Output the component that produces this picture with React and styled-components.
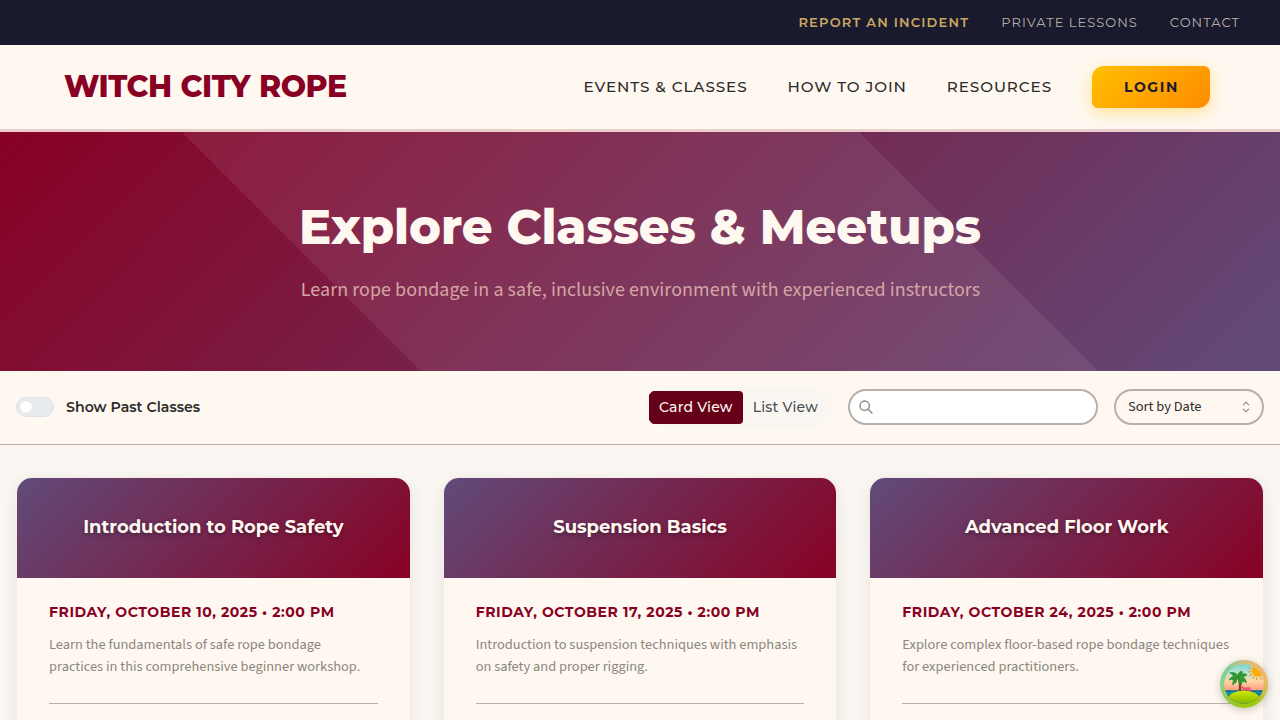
import React from 'react';
import styled, { createGlobalStyle } from 'styled-components';

const GlobalStyle = createGlobalStyle`
  *, *::before, *::after { box-sizing: border-box; }
  body {
    margin: 0;
    background: #faf6f2;
    color: #2b2b2b;
    font-family: 'Source Sans 3', 'Noto Sans CJK SC', 'Open Sans', sans-serif;
    font-size: 16px;
  }
  h1, h2, p { margin: 0; }
`;

const heading = `font-family: 'Montserrat', Inter, sans-serif;`;

const Page = styled.div`
  height: 100vh;
  overflow: hidden;
`;

const UtilityBar = styled.nav`
  ${heading}
  display: flex;
  align-items: center;
  justify-content: flex-end;
  gap: 32px;
  height: 45px;
  padding: 0 40px 2px;
  background: #1a1a2e;
`;

const UtilityLink = styled.a`
  font-size: 13px;
  font-weight: ${(p) => (p.$highlight ? 600 : 400)};
  letter-spacing: ${(p) => (p.$highlight ? '1.2px' : '1.03px')};
  line-height: 20px;
  color: ${(p) => (p.$highlight ? '#c9a961' : '#b8b0a8')};
  text-transform: uppercase;
`;

const Header = styled.header`
  ${heading}
  display: flex;
  align-items: center;
  justify-content: space-between;
  height: 87px;
  padding: 0 70px 0 64px;
  background: #fff8f0;
  border-bottom: 3px solid #e9cecb;
`;

const Logo = styled.a`
  padding-bottom: 2px;
  font-size: 30px;
  font-weight: 800;
  letter-spacing: -0.5px;
  word-spacing: 0.8px;
  color: #880124;
`;

const MainNav = styled.nav`
  display: flex;
  align-items: center;
  gap: 40px;
`;

const NavLink = styled.a`
  padding-bottom: 2px;
  font-size: 15.2px;
  font-weight: 500;
  letter-spacing: 0.92px;
  text-transform: uppercase;
`;

const LoginButton = styled.a`
  width: 118px;
  height: 42px;
  padding-left: 32px;
  border-radius: 12px 6px 12px 6px;
  background: linear-gradient(135deg, #ffbf00, #ff8c00);
  box-shadow: 0 4px 15px rgba(255, 191, 0, 0.4);
  color: #1a1a2e;
  font-size: 14px;
  font-weight: 700;
  letter-spacing: 1.6px;
  line-height: 42px;
`;

const Hero = styled.section`
  height: 239px;
  padding-top: 66px;
  text-align: center;
  background:
    linear-gradient(45deg, transparent 27.65%, rgba(235, 210, 220, 0.09) 27.75%, rgba(235, 210, 220, 0.09) 72.25%, transparent 72.35%),
    linear-gradient(135deg, #880124, #614b79);
`;

const HeroTitle = styled.h1`
  ${heading}
  font-size: 48px;
  font-weight: 800;
  letter-spacing: -0.06px;
  line-height: 58px;
  color: #fff8f0;
`;

const HeroText = styled.p`
  margin-top: 18px;
  padding-left: 1px;
  font-size: 20px;
  font-weight: 400;
  letter-spacing: 0.06px;
  line-height: 32px;
  color: #d4a5a5;
`;

const FilterBar = styled.section`
  display: flex;
  align-items: center;
  justify-content: space-between;
  height: 74px;
  padding: 0 16px 1px;
  background: #fff8f0;
  border-bottom: 1px solid #b8b0a8;
`;

const ToggleLabel = styled.label`
  ${heading}
  display: flex;
  align-items: center;
  gap: 12px;
  font-size: 14.2px;
  font-weight: 600;
`;

const Switch = styled.span`
  display: flex;
  align-items: center;
  width: 38px;
  height: 20px;
  padding: 0 2px;
  border: 1px solid #dee2e6;
  border-radius: 10px;
  background: #e9ecef;
`;

const Thumb = styled.span`
  width: 14px;
  height: 14px;
  border: 1px solid #dee2e6;
  border-radius: 50%;
  background: #fff;
`;

const Controls = styled.div`
  display: flex;
  align-items: center;
  gap: 16px;
`;

const ViewGroup = styled.div`
  display: flex;
  width: 187px;
  height: 41px;
  margin-top: 1px;
  padding: 4px;
  border-radius: 20px;
  overflow: hidden;
  background: #faf6f2;
`;

const ViewButton = styled.button`
  ${heading}
  height: 33px;
  padding: 0 10px;
  border: 0;
  border-radius: 4px;
  background: ${(p) => (p.$active ? '#660018' : 'transparent')};
  color: ${(p) => (p.$active ? '#fff8f0' : '#495057')};
  font-size: 14px;
  font-weight: 500;
  letter-spacing: 0.2px;
  line-height: 33px;
  white-space: nowrap;
`;

const Field = styled.div`
  display: flex;
  align-items: center;
  justify-content: space-between;
  width: ${(p) => p.$width}px;
  height: 36px;
  padding: ${(p) => p.$padding};
  border: 2px solid #b8b0a8;
  border-radius: 18px;
  background: ${(p) => p.$fill};
  font-size: 14.4px;
  line-height: 22px;
`;

const CardGrid = styled.main`
  display: grid;
  grid-template-columns: repeat(3, 1fr);
  gap: 32px;
  padding: 32px 16px;
`;

const Card = styled.article`
  min-height: 340px;
  border: 1px solid rgba(183, 109, 117, 0.1);
  border-radius: 16px;
  overflow: hidden;
  background: #fff8f0;
  box-shadow: 0 4px 15px rgba(0, 0, 0, 0.08);
`;

const CardHead = styled.div`
  display: flex;
  align-items: center;
  justify-content: center;
  height: 100px;
  padding-bottom: 2px;
  background: linear-gradient(135deg, #614b79, #880124);
`;

const CardTitle = styled.h2`
  ${heading}
  font-size: 18px;
  font-weight: 700;
  letter-spacing: -0.03px;
  line-height: 24px;
  color: #fff8f0;
  text-shadow: 0 2px 4px rgba(0, 0, 0, 0.35);
`;

const CardBody = styled.div`
  padding: 22px 32px;
`;

const CardDate = styled.p`
  ${heading}
  font-size: 14px;
  font-weight: 700;
  letter-spacing: 0.57px;
  line-height: 24px;
  white-space: nowrap;
  text-transform: uppercase;
  color: #880124;
`;

const CardText = styled.p`
  margin-top: 10px;
  padding-bottom: 25px;
  font-size: 14.4px;
  line-height: 22px;
  color: #8b8680;
`;

const CardFoot = styled.div`
  height: 80px;
  border-top: 1px solid #b8b0a8;
`;

const IslandButton = styled.button`
  position: fixed;
  right: 12px;
  bottom: 12px;
  width: 48px;
  height: 48px;
  padding: 0;
  border: 0;
  border-radius: 50%;
  background: none;
  box-shadow: 0 2px 8px rgba(0, 0, 0, 0.2);
  svg { display: block; }
`;

const SearchIcon = () => (
  <svg width="16" height="16" viewBox="0 0 24 24" fill="none" stroke="#8b8680" strokeWidth="2" strokeLinecap="round">
    <circle cx="10" cy="10" r="7" />
    <path d="M21 21l-6-6" />
  </svg>
);

const SelectorIcon = () => (
  <svg width="18" height="18" viewBox="0 0 15 15" fill="#868e96">
    <path d="M4.93 5.43a.45.45 0 0 0 .64.64L7.5 4.14l1.93 1.93a.45.45 0 0 0 .64-.64L7.82 3.18a.45.45 0 0 0-.64 0ZM10.07 9.57a.45.45 0 0 0-.64-.64L7.5 10.86 5.57 8.93a.45.45 0 0 0-.64.64l2.25 2.25c.18.17.46.17.64 0Z" />
  </svg>
);

const IslandIcon = () => (
  <svg width="48" height="48" viewBox="0 0 48 48">
    <defs>
      <linearGradient id="ring" x1="0" y1="0.1" x2="0.75" y2="1">
        <stop offset="0" stopColor="#6fd0a8" />
        <stop offset="0.3" stopColor="#8fcf86" />
        <stop offset="0.65" stopColor="#98c62c" />
        <stop offset="1" stopColor="#9fc900" />
      </linearGradient>
      <linearGradient id="ringWarm" x1="0.25" y1="0.7" x2="0.9" y2="0.2">
        <stop offset="0.3" stopColor="#f6bc7e" stopOpacity="0" />
        <stop offset="1" stopColor="#f9b573" />
      </linearGradient>
      <linearGradient id="sky" x1="0" y1="0" x2="0" y2="1">
        <stop offset="0.08" stopColor="#72d6d3" />
        <stop offset="0.26" stopColor="#b7e3cf" />
        <stop offset="0.44" stopColor="#ffd6a4" />
        <stop offset="0.66" stopColor="#ff967b" />
      </linearGradient>
      <linearGradient id="sand" x1="0" y1="0" x2="0" y2="1">
        <stop offset="0" stopColor="#d6e800" />
        <stop offset="1" stopColor="#68a900" />
      </linearGradient>
      <clipPath id="disc"><circle cx="24" cy="24" r="19.8" /></clipPath>
    </defs>
    <circle cx="24" cy="24" r="24" fill="url(#ring)" />
    <circle cx="24" cy="24" r="24" fill="url(#ringWarm)" />
    <g clipPath="url(#disc)">
      <rect width="48" height="48" fill="url(#sky)" />
      <circle cx="38" cy="10.5" r="6.2" fill="#ffac00" />
      <g stroke="#f78a20" strokeWidth="1.2" strokeLinecap="round">
        <path d="M28.8 8l1.3.4M28.8 11.8l1.4-.2M30 15.3l1.3-.9M32.8 18l.8-1.3M36.5 19.5l.3-1.5M41 19.2l-.3-1.4" />
      </g>
      <rect y="30.2" width="48" height="18" fill="#08718a" />
      <path d="M3 32.7q2-1.5 4 0t4 0 4 0 4 0 4 0 4 0 4 0 4 0 4 0 4 0M3 36q2-1.5 4 0t4 0 4 0 4 0 4 0 4 0 4 0 4 0 4 0 4 0" fill="none" stroke="#16a8b8" strokeWidth="1.1" />
      <path d="M17.6 18q2.4 7 .5 14h3q1-8-2-14z" fill="#7c3f2a" />
      <path d="M22.2 26.4l1.6 3.2 7.6.8M24.5 28.2h6M24 31.6l1.6-2M30.8 31.6l-1-2" fill="none" stroke="#e83a72" strokeWidth="1.3" />
      <ellipse cx="23.8" cy="39" rx="15.8" ry="8.6" fill="url(#sand)" />
    </g>
    <g fill="#2c9433" stroke="#2c9433" strokeWidth="0.9" strokeLinejoin="round">
      <path d="M18.5 17.2Q12.5 14.2 9 20q3-1.4 4.3.2 2.6-2.3 5.2-2.5z" />
      <path d="M18.5 17.8q-6.7 1.2-5.6 7.3 1-2.8 3-2.7.2-2.8 2.6-4.6z" />
      <path d="M18.5 17q-2.4-5.5-8.7-4.1 3 .7 3 2.4 3.1-.3 5.7 1.7z" />
      <path d="M18.5 17q-1.8-4.6 3.4-5.8 1.5 2.6-3.4 5.8z" />
      <path d="M18.5 17.2q4.2-5.6 8.5-2.2-2.4.2-3 2.1-2.3-1.1-5.5.1z" />
      <path d="M18.6 17.4q7.2-1.3 7.7 5.3-1.8-1.9-3.5-1-1.1-2.8-4.2-4.3z" />
      <path d="M18.5 17.8q5 2.8 2.8 7.2-.8-2.2-2.5-2.4.8-2.1-.3-4.8z" />
    </g>
  </svg>
);

const events = [
  {
    title: 'Introduction to Rope Safety',
    date: 'Friday, October 10, 2025 • 2:00 PM',
    text: 'Learn the fundamentals of safe rope bondage practices in this comprehensive beginner workshop.',
  },
  {
    title: 'Suspension Basics',
    date: 'Friday, October 17, 2025 • 2:00 PM',
    text: 'Introduction to suspension techniques with emphasis on safety and proper rigging.',
  },
  {
    title: 'Advanced Floor Work',
    date: 'Friday, October 24, 2025 • 2:00 PM',
    text: 'Explore complex floor-based rope bondage techniques for experienced practitioners.',
  },
];

export default function App() {
  return (
    <Page>
      <GlobalStyle />
      <UtilityBar>
        <UtilityLink $highlight>Report an Incident</UtilityLink>
        <UtilityLink>Private Lessons</UtilityLink>
        <UtilityLink>Contact</UtilityLink>
      </UtilityBar>
      <Header>
        <Logo>WITCH CITY ROPE</Logo>
        <MainNav>
          <NavLink>Events &amp; Classes</NavLink>
          <NavLink>How to Join</NavLink>
          <NavLink>Resources</NavLink>
          <LoginButton>LOGIN</LoginButton>
        </MainNav>
      </Header>
      <Hero>
        <HeroTitle>Explore Classes &amp; Meetups</HeroTitle>
        <HeroText>Learn rope bondage in a safe, inclusive environment with experienced instructors</HeroText>
      </Hero>
      <FilterBar>
        <ToggleLabel>
          <Switch><Thumb /></Switch>
          Show Past Classes
        </ToggleLabel>
        <Controls>
          <ViewGroup>
            <ViewButton $active>Card View</ViewButton>
            <ViewButton>List View</ViewButton>
          </ViewGroup>
          <Field $width={250} $padding="0 8px" $fill="#fff">
            <SearchIcon />
          </Field>
          <Field $width={150} $padding="0 7px 0 12px" $fill="#fff8f0">
            Sort by Date
            <SelectorIcon />
          </Field>
        </Controls>
      </FilterBar>
      <CardGrid>
        {events.map((event) => (
          <Card key={event.title}>
            <CardHead><CardTitle>{event.title}</CardTitle></CardHead>
            <CardBody>
              <CardDate>{event.date}</CardDate>
              <CardText>{event.text}</CardText>
              <CardFoot />
            </CardBody>
          </Card>
        ))}
      </CardGrid>
      <IslandButton aria-label="Open developer tools"><IslandIcon /></IslandButton>
    </Page>
  );
}
